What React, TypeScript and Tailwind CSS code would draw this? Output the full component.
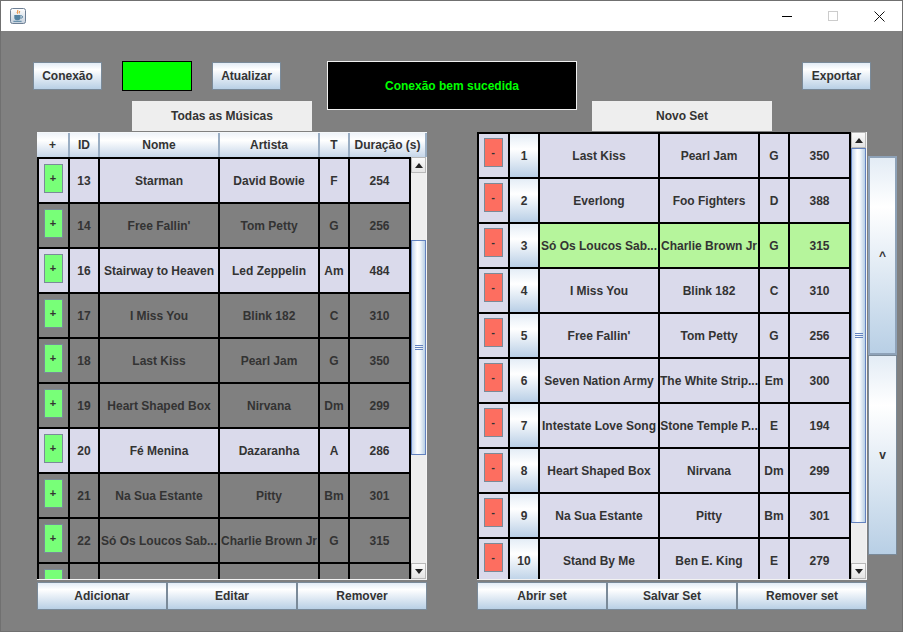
type Song = { id: string; nome: string; artista: string; tom: string; dur: string };

const todas: (Song & { light: boolean })[] = [
  { id: "13", nome: "Starman", artista: "David Bowie", tom: "F", dur: "254", light: true },
  { id: "14", nome: "Free Fallin'", artista: "Tom Petty", tom: "G", dur: "256", light: false },
  { id: "16", nome: "Stairway to Heaven", artista: "Led Zeppelin", tom: "Am", dur: "484", light: true },
  { id: "17", nome: "I Miss You", artista: "Blink 182", tom: "C", dur: "310", light: false },
  { id: "18", nome: "Last Kiss", artista: "Pearl Jam", tom: "G", dur: "350", light: false },
  { id: "19", nome: "Heart Shaped Box", artista: "Nirvana", tom: "Dm", dur: "299", light: false },
  { id: "20", nome: "Fé Menina", artista: "Dazaranha", tom: "A", dur: "286", light: true },
  { id: "21", nome: "Na Sua Estante", artista: "Pitty", tom: "Bm", dur: "301", light: false },
  { id: "22", nome: "Só Os Loucos Sab...", artista: "Charlie Brown Jr", tom: "G", dur: "315", light: false },
  { id: "", nome: "", artista: "", tom: "", dur: "", light: false },
];

const set: (Song & { sel?: boolean })[] = [
  { id: "1", nome: "Last Kiss", artista: "Pearl Jam", tom: "G", dur: "350" },
  { id: "2", nome: "Everlong", artista: "Foo Fighters", tom: "D", dur: "388" },
  { id: "3", nome: "Só Os Loucos Sab...", artista: "Charlie Brown Jr", tom: "G", dur: "315", sel: true },
  { id: "4", nome: "I Miss You", artista: "Blink 182", tom: "C", dur: "310" },
  { id: "5", nome: "Free Fallin'", artista: "Tom Petty", tom: "G", dur: "256" },
  { id: "6", nome: "Seven Nation Army", artista: "The White Strip...", tom: "Em", dur: "300" },
  { id: "7", nome: "Intestate Love Song", artista: "Stone Temple P...", tom: "E", dur: "194" },
  { id: "8", nome: "Heart Shaped Box", artista: "Nirvana", tom: "Dm", dur: "299" },
  { id: "9", nome: "Na Sua Estante", artista: "Pitty", tom: "Bm", dur: "301" },
  { id: "10", nome: "Stand By Me", artista: "Ben E. King", tom: "E", dur: "279" },
];

const btn =
  "flex items-center justify-center border border-[#7a8a99] bg-[linear-gradient(to_bottom,#e3ecf5_0%,#ffffff_25%,#b8cfe5_100%)] text-[12px] font-bold text-[#333333]";
const cell = "shrink-0 border-r-2 border-black flex items-center justify-center overflow-hidden whitespace-nowrap";

const JavaIcon = () => (
  <svg width="16" height="16" viewBox="0 0 16 16">
    <defs>
      <linearGradient id="jg" x1="0" y1="0" x2="0" y2="1">
        <stop offset="0" stopColor="#ffffff" />
        <stop offset="1" stopColor="#c5d0dc" />
      </linearGradient>
    </defs>
    <rect x="0.5" y="0.5" width="15" height="15" rx="2" fill="url(#jg)" stroke="#6d7f94" />
    <path d="M7.6 2.2c1.2 1-1.2 1.9 0 3.4M9.4 3c.7.7-.7 1.3 0 2.3" stroke="#e76f00" fill="none" strokeWidth="1" />
    <path d="M4.3 7h6.2v2.6a2.6 2.6 0 0 1-2.6 2.6h-1a2.6 2.6 0 0 1-2.6-2.6z" fill="#5382a1" />
    <path d="M10.5 7.7h.8a1.2 1.2 0 0 1 0 2.4h-.8" stroke="#5382a1" fill="none" />
    <path d="M3.4 13.3h8.2" stroke="#5382a1" />
  </svg>
);

const Arrow = ({ up }: { up?: boolean }) => (
  <div className="h-[16px] shrink-0 flex items-center justify-center border border-[#b8b8b8] bg-[linear-gradient(to_bottom,#fafafa,#e4e4e4)]">
    <svg width="8" height="5" viewBox="0 0 8 5">
      {up ? <path d="M0 5L4 0L8 5Z" fill="#222" /> : <path d="M0 0L4 5L8 0Z" fill="#222" />}
    </svg>
  </div>
);

const ScrollBar = ({ thumb }: { thumb: string }) => (
  <div className="w-[16px] shrink-0 flex flex-col bg-[#eeeeee] border-r border-[#f4f4f4]">
    <Arrow up />
    <div className="flex-1 flex flex-col">
      <div
        className={`${thumb} flex flex-col items-center justify-center gap-px border border-[#6382bf] bg-[linear-gradient(to_right,#c3d5ee,#ffffff_40%,#f4f8fc_60%,#b8cfe5)]`}
      >
        <div className="w-[8px] h-px bg-[#6382bf]" />
        <div className="w-[8px] h-px bg-[#6382bf]" />
        <div className="w-[8px] h-px bg-[#6382bf]" />
      </div>
    </div>
    <Arrow />
  </div>
);

const LeftRow = ({ r }: { r: Song & { light: boolean } }) => (
  <div className={`flex h-[45px] shrink-0 border-b-2 border-black ${r.light ? "bg-[#dadaeb]" : "bg-[#808080]"}`}>
    <div className="w-[31px] shrink-0 border-r-2 border-black flex justify-center pt-[5px] pr-[1px]">
      <div className="w-[19px] h-[29px] bg-[#78ff78] border border-[#7a8a99] flex items-center justify-center text-[11px]">
        {r.id ? "+" : ""}
      </div>
    </div>
    <div className={`${cell} w-[30px] pt-[1px]`}>{r.id}</div>
    <div className={`${cell} w-[120px] pt-[1px]`}>{r.nome}</div>
    <div className={`${cell} w-[100px] pt-[1px]`}>{r.artista}</div>
    <div className={`${cell} w-[30px] pt-[1px]`}>{r.tom}</div>
    <div className={`${cell} w-[61px] pt-[1px]`}>{r.dur}</div>
  </div>
);

const RightRow = ({ r }: { r: Song & { sel?: boolean } }) => {
  const g = r.sel ? "bg-[#b6f59c]" : "";
  return (
    <div className="flex h-[45px] shrink-0 border-b-2 border-black bg-[#dadaeb]">
      <div className="w-[31px] shrink-0 border-r-2 border-black flex justify-center pt-[4px] pr-[1px]">
        <div className="w-[19px] h-[29px] bg-[#fd6e60] border border-[#7a8a99] flex items-center justify-center text-[11px]">
          -
        </div>
      </div>
      <div className={`${cell} w-[30px] bg-[linear-gradient(to_bottom,#e4edf6,#ffffff_35%,#b9cfe6)]`}>{r.id}</div>
      <div className={`${cell} w-[120px] ${g}`}>{r.nome}</div>
      <div className={`${cell} w-[100px] ${g}`}>{r.artista}</div>
      <div className={`${cell} w-[30px] ${g}`}>{r.tom}</div>
      <div className={`${cell} w-[61px] ${g}`}>{r.dur}</div>
    </div>
  );
};

const head =
  "shrink-0 flex items-center justify-center border-r-2 border-[#9aaec4] bg-[linear-gradient(to_bottom,#eef3f9,#ffffff_30%,#c6d6e9)]";

export default function App() {
  return (
    <div className="w-[903px] h-[632px] overflow-hidden flex flex-col border border-[#707070] font-['Liberation_Sans',Arial,sans-serif] text-[12px] font-bold text-[#333333]">
      {/* barra de título */}
      <div className="h-[30px] shrink-0 bg-white flex items-center">
        <div className="ml-[9px]">
          <JavaIcon />
        </div>
        <div className="flex-1" />
        <div className="w-[46px] h-full flex items-center justify-center">
          <div className="w-[10px] h-px bg-black" />
        </div>
        <div className="w-[46px] h-full flex items-center justify-center">
          <div className="w-[10px] h-[10px] border border-[#cccccc]" />
        </div>
        <div className="w-[46px] h-full flex items-center justify-center">
          <svg width="11" height="11" viewBox="0 0 11 11">
            <path d="M0.5 0.5L10.5 10.5M10.5 0.5L0.5 10.5" stroke="#111" strokeWidth="1" />
          </svg>
        </div>
      </div>

      <div className="flex-1 bg-[#808080] flex flex-col">
        {/* controles do topo */}
        <div className="mt-[30px] h-[30px] flex items-center">
          <div className={`${btn} ml-[32px] w-[69px] h-[28px]`}>Conexão</div>
          <div className="ml-[20px] w-[70px] h-[30px] bg-[#00ff00] border border-black" />
          <div className={`${btn} ml-[20px] w-[69px] h-[28px]`}>Atualizar</div>
          <div className="ml-[46px] w-[250px] h-[49px] self-start shrink-0 bg-black border border-[#f0f0f0] flex items-center justify-center text-[#00ff00]">
            Conexão bem sucedida
          </div>
          <div className={`${btn} ml-[225px] w-[69px] h-[28px]`}>Exportar</div>
        </div>

        <div className="mt-[10px] h-[30px] flex">
          <div className="ml-[131px] w-[180px] bg-[#eeeeee] flex items-center justify-center">Todas as Músicas</div>
          <div className="ml-[280px] w-[180px] bg-[#eeeeee] flex items-center justify-center">Novo Set</div>
        </div>

        <div className="mt-[1px] flex items-start">
          {/* painel esquerdo */}
          <div className="ml-[36px] w-[390px] flex flex-col">
            <div className="h-[25px] flex border-t border-[#f4f7fa]">
              <div className={`${head} w-[33px]`}>+</div>
              <div className={`${head} w-[30px]`}>ID</div>
              <div className={`${head} w-[120px]`}>Nome</div>
              <div className={`${head} w-[100px]`}>Artista</div>
              <div className={`${head} w-[30px]`}>T</div>
              <div className={`${head} w-[77px] border-r-0`}>Duração (s)</div>
            </div>
            <div className="h-[423px] flex border-b border-[#f2f2f2] overflow-hidden">
              <div className="w-[374px] flex flex-col border-l-2 border-t-2 border-black overflow-hidden">
                {todas.map((r, i) => (
                  <LeftRow key={i} r={r} />
                ))}
              </div>
              <ScrollBar thumb="mt-[67px] h-[215px]" />
            </div>
            <div className="mt-[2px] h-[28px] flex">
              <div className={`${btn} w-[130px]`}>Adicionar</div>
              <div className={`${btn} w-[130px]`}>Editar</div>
              <div className={`${btn} w-[130px]`}>Remover</div>
            </div>
          </div>

          {/* painel direito */}
          <div className="ml-[50px] w-[390px] flex flex-col">
            <div className="h-[448px] flex border-b border-[#f2f2f2] overflow-hidden">
              <div className="w-[374px] flex flex-col border-l-2 border-t-2 border-black overflow-hidden">
                {set.map((r, i) => (
                  <RightRow key={i} r={r} />
                ))}
              </div>
              <ScrollBar thumb="h-[375px]" />
            </div>
            <div className="mt-[2px] h-[28px] flex">
              <div className={`${btn} w-[130px]`}>Abrir set</div>
              <div className={`${btn} w-[130px]`}>Salvar Set</div>
              <div className={`${btn} w-[130px]`}>Remover set</div>
            </div>
          </div>

          <div className="ml-[1px] mt-[24px] w-[29px] flex flex-col">
            <div className={`${btn} h-[199px] border-2 border-[#8ea2b8]`}>^</div>
            <div className={`${btn} h-[200px]`}>v</div>
          </div>
        </div>
      </div>
    </div>
  );
}
